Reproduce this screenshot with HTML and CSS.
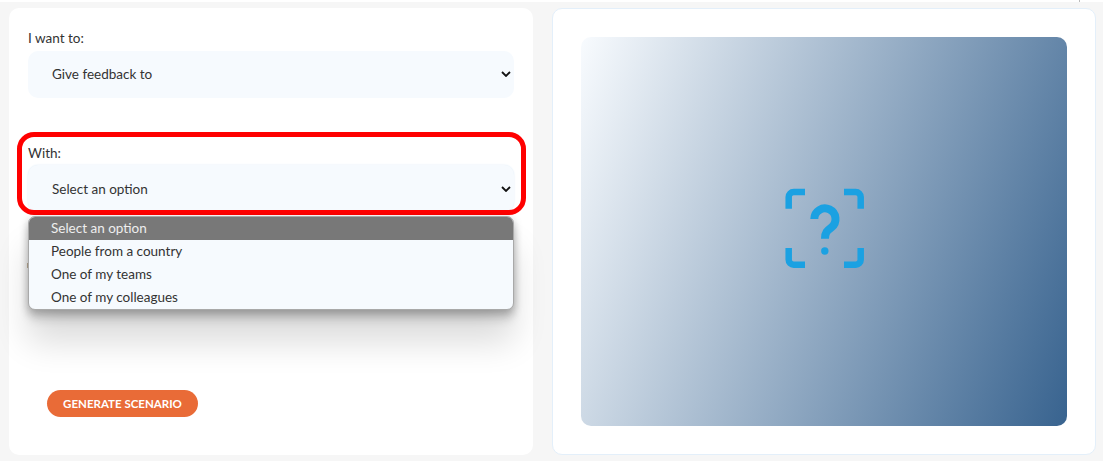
FILE: index.html
```html
<!DOCTYPE html>
<html lang="en">
<head>
    <meta charset="UTF-8">
    <meta name="viewport" content="width=device-width, initial-scale=1.0">
    <title>Generate scenario</title>
    <link rel="stylesheet" href="styles.css">
</head>
<body>
    <div class="top-strip"><span class="top-tick"></span></div>

    <div class="container">
        <!-- form -->
        <form class="card form-card">
            <div class="field field-first">
                <div class="field-label">I want to:</div>
                <div class="select">
                    <span>Give feedback to</span>
                    <svg class="chevron" viewBox="0 0 10 6"><path d="M1 1l4 4 4-4"/></svg>
                </div>
            </div>

            <div class="field field-with">
                <div class="field-label">With:</div>
                <div class="select select-open">
                    <span>Select an option</span>
                    <svg class="chevron" viewBox="0 0 10 6"><path d="M1 1l4 4 4-4"/></svg>
                </div>
                <div class="highlight"></div>
                <div class="peek"></div>
                <ul class="menu">
                    <li class="selected">Select an option</li>
                    <li>People from a country</li>
                    <li>One of my teams</li>
                    <li>One of my colleagues</li>
                </ul>
            </div>

            <button type="button" class="btn-generate">GENERATE SCENARIO</button>
        </form>

        <!-- preview -->
        <div class="card preview-card">
            <div class="preview">
                <svg class="unknown-icon" viewBox="0 0 80 80">
                    <path d="M3.7 20.7V9a5 5 0 0 1 5-5H20"/>
                    <path d="M59 4h11.7a5 5 0 0 1 5 5v11.7"/>
                    <path d="M3.7 60v11.7a5 5 0 0 0 5 5H20"/>
                    <path d="M59 76.7h11.7a5 5 0 0 0 5-5V60"/>
                    <path class="mark" d="M29.3 31a10.6 10.6 0 1 1 17.2 8.3c-4.200 3.200-6.500 5-6.500 11.400"/>
                    <circle cx="39.800" cy="63" r="3.700"/>
                </svg>
            </div>
        </div>
    </div>
</body>
</html>
```

FILE: styles.css
```css
* {
    box-sizing: border-box;
}
body {
    font-family: Lato, "Open Sans", sans-serif;
    font-size: 13.5px;
    color: #333;
    background-color: #f6f6f6;
    margin: 0;
    padding: 0;
    height: 461px;
    overflow: hidden;
}
.top-strip {
    height: 2px;
    background-color: #fff;
    display: flex;
    justify-content: flex-end;
    padding-right: 23px;
}
.top-tick {
    width: 1px;
    background-color: #bbb;
}
.container {
    display: flex;
    gap: 19px;
    padding: 6px 7px 0 9px;
}
.card {
    background-color: #fff;
    border-radius: 10px;
    height: 447px;
}
.form-card {
    width: 524px;
    padding: 20px 19px 0;
    display: flex;
    flex-direction: column;
}
.field {
    position: relative;
}
.field-with {
    margin-top: 45px;
}
.field-label {
    height: 22px;
    line-height: 21px;
}
.field-first .field-label {
    height: 23px;
}
.select {
    height: 47px;
    width: 486px;
    background-color: #f6fafe;
    border-radius: 10px;
    padding: 0 24px 2px;
    display: flex;
    align-items: center;
    justify-content: space-between;
}
.select-open {
    padding-bottom: 0;
    box-shadow: 0 0 2px #dbe9f7;
}
.chevron {
    width: 10px;
    height: 6px;
    margin-right: -21px;
    fill: none;
    stroke: #111;
    stroke-width: 1.800;
}
.highlight {
    position: absolute;
    left: -11px;
    top: -11px;
    width: 509px;
    height: 83px;
    border: 5px solid #f00;
    border-radius: 17px;
}
.peek {
    position: absolute;
    left: -1px;
    top: 120px;
    width: 1px;
    height: 5px;
    background-color: #c8b8a0;
}
.menu {
    position: absolute;
    left: 0;
    top: 73px;
    width: 486px;
    margin: 0;
    padding: 0;
    list-style: none;
    background-color: #f6fafe;
    border: 1px solid #a9a9a9;
    border-radius: 7px;
    overflow: hidden;
    box-shadow: 0 3px 8px rgba(0, 0, 0, 0.25), 0 10px 10px rgba(0, 0, 0, 0.12), 0 32px 34px rgba(0, 0, 0, 0.14);
}
.menu li {
    height: 23px;
    line-height: 22px;
    padding-left: 22px;
}
.menu li.selected {
    background-color: #787878;
    color: #eee;
}
.btn-generate {
    width: 151px;
    height: 27px;
    margin: 178px 0 0 19px;
    border: none;
    border-radius: 14px;
    background-color: #e96b37;
    color: #fff;
    font-family: Lato, "Open Sans", sans-serif;
    font-size: 11.500px;
    font-weight: bold;
    padding: 0;
}
.preview-card {
    width: 544px;
    border: 1px solid #e3effa;
    padding: 28px 28px 0 28px;
}
.preview {
    width: 486px;
    height: 389px;
    border-radius: 10px;
    background: linear-gradient(110deg, #f8fbfe 0%, #38638f 100%);
    display: flex;
    align-items: center;
    justify-content: center;
    padding: 0 0 8px 2px;
}
.unknown-icon {
    width: 80px;
    height: 80px;
    fill: none;
    stroke: #1ba1e2;
    stroke-width: 6.500;
}
.unknown-icon .mark {
    stroke-width: 8;
}
.unknown-icon circle {
    fill: #1ba1e2;
    stroke: none;
}
```
